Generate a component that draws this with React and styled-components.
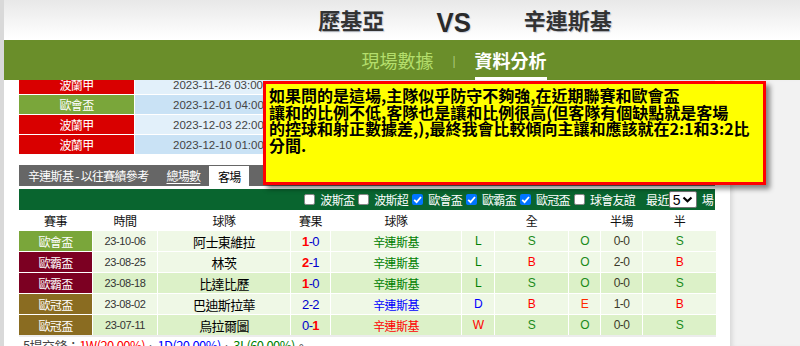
import React from "react";
import styled, { createGlobalStyle } from "styled-components";

const GlobalStyle = createGlobalStyle`
  html, body {
    margin: 0;
    padding: 0;
    background: #fff;
  }
  body {
    font-family: "Liberation Sans", "Noto Sans CJK TC", sans-serif;
    overflow: hidden;
  }
`;

const CJK = `"Noto Sans CJK TC", "Liberation Sans", sans-serif`;

const cupColors = {
  波蘭甲: "#d90000",
  歐會盃: "#7aa63a",
  歐霸盃: "#7c0022",
  歐冠盃: "#8a6c21",
};
const resColors = { L: "#008000", D: "#0000ff", W: "#ff0000" };
const ahColors = { S: "#1a8a1a", B: "#ff0000" };
const ouColors = { O: "#1a8a1a", E: "#ff2a00" };

const prevRows = [
  { cup: "波蘭甲", date: "2023-11-26 03:00:00", light: true },
  { cup: "歐會盃", date: "2023-12-01 04:00:00", light: false },
  { cup: "波蘭甲", date: "2023-12-03 22:00:00", light: true },
  { cup: "波蘭甲", date: "2023-12-10 01:00:00", light: false },
];

const matches = [
  { cup: "歐會盃", date: "23-10-06", team: "阿士東維拉", h: 1, a: 0, res: "L", ah: "S", ou: "O", half: "0-0", dark: false },
  { cup: "歐霸盃", date: "23-08-25", team: "林茨", h: 2, a: 1, res: "L", ah: "B", ou: "O", half: "2-0", dark: false },
  { cup: "歐霸盃", date: "23-08-18", team: "比達比歷", h: 1, a: 0, res: "L", ah: "S", ou: "O", half: "0-0", dark: true },
  { cup: "歐冠盃", date: "23-08-02", team: "巴迪斯拉華", h: 2, a: 2, res: "D", ah: "B", ou: "E", half: "1-0", dark: false },
  { cup: "歐冠盃", date: "23-07-11", team: "烏拉爾圖", h: 0, a: 1, res: "W", ah: "S", ou: "O", half: "0-0", dark: true },
];

const filters = [
  { name: "波斯盃", on: false },
  { name: "波斯超", on: false },
  { name: "歐會盃", on: true },
  { name: "歐霸盃", on: true },
  { name: "歐冠盃", on: true },
  { name: "球會友誼", on: false },
];

const App = () => {
  return (
    <>
      <GlobalStyle />
      <Page>
        <LeftStrip />
        <Main>
          <Header>
            <TeamName $side="left">歷基亞</TeamName>
            <Vs>VS</Vs>
            <TeamName $side="right">辛連斯基</TeamName>
          </Header>
          <Nav>
            <NavItem>現場數據</NavItem>
            <NavSep>|</NavSep>
            <NavItem $active>資料分析</NavItem>
          </Nav>
          <Body>
            <Content>
              <PrevTable>
                {prevRows.map((r, i) => (
                  <PrevRow key={i}>
                    <CupCell $bg={cupColors[r.cup]}>{r.cup}</CupCell>
                    <PrevDate $light={r.light}>{r.date}</PrevDate>
                  </PrevRow>
                ))}
              </PrevTable>

              <TabBar>
                <TabTitle>辛連斯基 - 以往賽績參考</TabTitle>
                <TabLink>總場數</TabLink>
                <TabActive>客場</TabActive>
              </TabBar>

              <FilterBar>
                {filters.map((f) => (
                  <FilterItem key={f.name}>
                    <CheckBox $on={f.on}>
                      {f.on && (
                        <svg width="11" height="11" viewBox="0 0 11 11">
                          <polyline
                            points="2.2,5.8 4.6,8.2 9,3"
                            fill="none"
                            stroke="#fff"
                            strokeWidth="1.8"
                          />
                        </svg>
                      )}
                    </CheckBox>
                    {f.name}
                  </FilterItem>
                ))}
                <RecentLabel>最近</RecentLabel>
                <SelectBox>
                  5
                  <svg width="11" height="7" viewBox="0 0 11 7">
                    <polyline
                      points="1.5,1.5 5.5,5.3 9.5,1.5"
                      fill="none"
                      stroke="#000"
                      strokeWidth="2.2"
                    />
                  </svg>
                </SelectBox>
                <FilterText>場</FilterText>
              </FilterBar>

              <Grid>
                <HeadRow>
                  <HeadCell>賽事</HeadCell>
                  <HeadCell>時間</HeadCell>
                  <HeadCell>球隊</HeadCell>
                  <HeadCell>賽果</HeadCell>
                  <HeadCell>球隊</HeadCell>
                  <HeadCell />
                  <HeadCell>全</HeadCell>
                  <HeadCell />
                  <HeadCell>半場</HeadCell>
                  <HeadCell>半</HeadCell>
                </HeadRow>
                {matches.map((m, i) => (
                  <DataRow key={i}>
                    <CupCell $bg={cupColors[m.cup]}>{m.cup}</CupCell>
                    <Cell $dark={m.dark} $date>{m.date}</Cell>
                    <Cell $dark={m.dark} $color="#000" $size={13}>{m.team}</Cell>
                    <Cell $dark={m.dark} $color="#0000cc" $size={13}>
                      <Goal $win={m.h > m.a}>{m.h}</Goal>-<Goal $win={m.a > m.h}>{m.a}</Goal>
                    </Cell>
                    <Cell $dark={m.dark} $color={resColors[m.res]}>辛連斯基</Cell>
                    <Cell $dark={m.dark} $color={resColors[m.res]}>{m.res}</Cell>
                    <Cell $dark={m.dark} $color={ahColors[m.ah]}>{m.ah}</Cell>
                    <Cell $dark={m.dark} $color={ouColors[m.ou]}>{m.ou}</Cell>
                    <Cell $dark={m.dark} $color="#3c3a2a">{m.half}</Cell>
                    <Cell $dark={m.dark} $color={ahColors[m.ah]}>{m.ah}</Cell>
                  </DataRow>
                ))}
              </Grid>

              <Summary>
                5場交鋒：<SumPart $c="#ff0000">1W(20.00%)</SumPart>、
                <SumPart $c="#0000ff">1D(20.00%)</SumPart>、
                <SumPart $c="#008000">3L(60.00%)</SumPart>。
              </Summary>
            </Content>
            <Gutter />
          </Body>

          <Tooltip>
            如果問的是這場,主隊似乎防守不夠強,在近期聯賽和歐會盃
            <br />
            讓和的比例不低,客隊也是讓和比例很高(但客隊有個缺點就是客場
            <br />
            的控球和射正數據差,),最終我會比較傾向主讓和應該就在2:1和3:2比
            <br />
            分間.
          </Tooltip>
        </Main>
      </Page>
    </>
  );
};

const Page = styled.div`
  display: flex;
  width: 800px;
  height: 346px;
  overflow: hidden;
`;

const LeftStrip = styled.div`
  width: 4px;
  flex-shrink: 0;
  background: #d9d9d9;
`;

const Main = styled.div`
  flex: 1;
  display: flex;
  flex-direction: column;
  position: relative;
  min-width: 0;
`;

const Header = styled.header`
  height: 40px;
  flex-shrink: 0;
  background: linear-gradient(#e8e8e8, #fafafa 75%, #fff);
  display: grid;
  grid-template-columns: 1fr auto 1fr;
  align-items: center;
  column-gap: 51px;
  padding-left: 104px;
`;

const TeamName = styled.div`
  justify-self: ${({ $side }) => ($side === "left" ? "end" : "start")};
  font-family: ${CJK};
  font-weight: 700;
  font-size: 22px;
  color: #333;
  text-shadow: 1px 1px 1px rgba(60, 80, 120, 0.25);
  margin-top: -2px;
`;

const Vs = styled.div`
  font-family: "Liberation Sans", sans-serif;
  font-weight: 700;
  font-size: 28px;
  color: #2a2a2a;
  transform: scaleX(0.92);
  margin-top: 5px;
  text-shadow: 1px 1px 1px rgba(60, 80, 120, 0.25);
`;

const Nav = styled.nav`
  height: 40px;
  flex-shrink: 0;
  background: #6a8e2a;
  display: flex;
  justify-content: center;
  align-items: stretch;
  gap: 19px;
  padding-left: 104px;
`;

const NavItem = styled.div`
  display: flex;
  align-items: center;
  box-sizing: border-box;
  padding-top: 2px;
  border-bottom: 3px solid ${({ $active }) => ($active ? "#fff" : "transparent")};
  font-family: ${CJK};
  font-size: 18px;
  font-weight: ${({ $active }) => ($active ? 700 : 400)};
  color: ${({ $active }) => ($active ? "#fff" : "#b4de6c")};
`;

const NavSep = styled.div`
  display: flex;
  align-items: center;
  font-size: 12px;
  color: #a9c97a;
  padding-top: 2px;
`;

const Body = styled.div`
  flex: 1;
  display: flex;
  overflow: hidden;
`;

const Content = styled.div`
  width: 726px;
  flex-shrink: 0;
  box-sizing: border-box;
  padding-left: 15px;
  background: #fff;
  overflow: hidden;
`;

const Gutter = styled.div`
  flex: 1;
  background: #f2f2f2;
  box-shadow: inset 5px 0 5px -3px rgba(0, 0, 0, 0.12);
`;

const PrevTable = styled.div`
  margin-top: -5px;
  display: flex;
  flex-direction: column;
  gap: 1px;
  width: 696px;
`;

const PrevRow = styled.div`
  display: grid;
  grid-template-columns: 115px 1fr;
  column-gap: 1px;
  height: 19px;
`;

const CupCell = styled.div`
  background: ${({ $bg }) => $bg};
  color: #fff;
  font-family: ${CJK};
  font-size: 12px;
  letter-spacing: -0.6px;
  display: flex;
  align-items: center;
  justify-content: center;
`;

const PrevDate = styled.div`
  background: ${({ $light }) => ($light ? "#e2f0fa" : "#c9e2f5")};
  color: #444;
  font-size: 11.5px;
  display: flex;
  align-items: center;
  padding-left: 38px;
`;

const TabBar = styled.div`
  margin-top: 11px;
  width: 696px;
  height: 21px;
  background: #666;
  display: flex;
  align-items: stretch;
  color: #fff;
  font-family: ${CJK};
  font-size: 12px;
  letter-spacing: -0.7px;
`;

const TabTitle = styled.div`
  display: flex;
  align-items: center;
  padding-left: 9px;
`;

const TabLink = styled.div`
  display: flex;
  align-items: center;
  margin-left: 18px;
  text-decoration: underline;
  text-underline-offset: 2px;
`;

const TabActive = styled.div`
  display: flex;
  align-items: center;
  justify-content: center;
  width: 40px;
  margin: 1px 0 0 9px;
  background: #fff;
  color: #000;
`;

const FilterBar = styled.div`
  margin-top: 3px;
  width: 696px;
  height: 21px;
  box-sizing: border-box;
  background: #09652f;
  display: flex;
  justify-content: flex-end;
  align-items: center;
  padding-right: 2px;
  color: #fff;
  font-family: ${CJK};
  font-size: 12px;
  letter-spacing: -0.7px;
`;

const FilterItem = styled.div`
  display: flex;
  align-items: center;
  gap: 5px;
  margin-left: 4px;
`;

const CheckBox = styled.span`
  width: 11px;
  height: 11px;
  box-sizing: border-box;
  border-radius: 2px;
  border: ${({ $on }) => ($on ? "none" : "1px solid #888")};
  background: ${({ $on }) => ($on ? "#0075ff" : "#fff")};
  display: inline-flex;
`;

const RecentLabel = styled.span`
  margin-left: 11px;
`;

const SelectBox = styled.div`
  width: 28px;
  height: 17px;
  box-sizing: border-box;
  margin: 0 3px 0 0;
  background: #fff;
  border: 1px solid #767676;
  border-radius: 2px;
  display: flex;
  align-items: center;
  justify-content: space-between;
  padding: 0 3px 0 3px;
  color: #000;
  font-family: "Liberation Sans", sans-serif;
  font-size: 14px;
  letter-spacing: 0;
`;

const FilterText = styled.span`
  margin-left: 2px;
`;

const Grid = styled.div`
  width: 697px;
  display: flex;
  flex-direction: column;
  gap: 1px;
  border-bottom: 2px solid #ececec;
`;

const columns = "73px 64px 132px 39px 130px 32px 73px 31px 41px 73px";

const HeadRow = styled.div`
  display: grid;
  grid-template-columns: ${columns};
  column-gap: 1px;
  height: 20px;
`;

const HeadCell = styled.div`
  display: flex;
  align-items: center;
  justify-content: center;
  font-family: ${CJK};
  font-size: 12px;
  letter-spacing: -0.6px;
  color: #111;
`;

const DataRow = styled.div`
  display: grid;
  grid-template-columns: ${columns};
  column-gap: 1px;
  height: 20px;
`;

const Cell = styled.div`
  display: flex;
  align-items: center;
  justify-content: center;
  background: ${({ $dark }) => ($dark ? "#dcf1c8" : "#eff8e6")};
  color: ${({ $color }) => $color || "#333"};
  font-size: ${({ $date, $size }) => ($date ? 11 : $size || 12)}px;
  letter-spacing: ${({ $date }) => ($date ? "-0.4px" : "-0.6px")};
`;

const Goal = styled.span`
  color: ${({ $win }) => ($win ? "#ff0000" : "#0000cc")};
  font-weight: ${({ $win }) => ($win ? 700 : 400)};
`;

const Summary = styled.div`
  padding: 1px 0 0 4px;
  font-family: ${CJK};
  font-size: 13px;
  line-height: 15px;
  letter-spacing: -0.6px;
  color: #444;
  white-space: nowrap;
`;

const SumPart = styled.span`
  color: ${({ $c }) => $c};
`;

const Tooltip = styled.div`
  position: absolute;
  left: 259px;
  top: 81px;
  width: 503px;
  height: 104px;
  box-sizing: border-box;
  border: 3px solid #ff0000;
  background: #ffff00;
  box-shadow: 4px 4px 5px rgba(0, 0, 0, 0.45);
  padding: 3px 3px;
  font-family: ${CJK};
  font-weight: 700;
  font-size: 16px;
  line-height: 16.5px;
  color: #000;
  white-space: nowrap;
`;

export default App;
